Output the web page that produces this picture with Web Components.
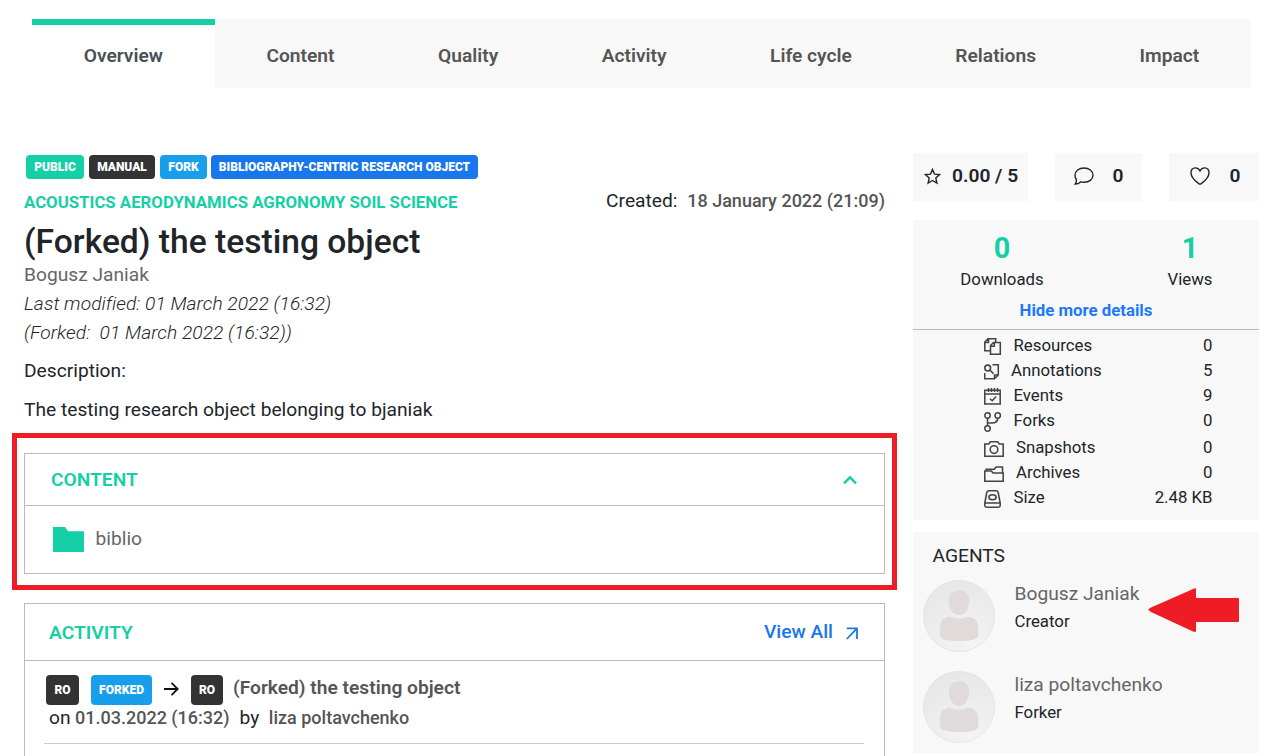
<!DOCTYPE html>
<html lang="en">
<head>
<meta charset="utf-8">
<title>(Forked) the testing object</title>
<style>
html,body{margin:0;padding:0;background:#fff}
body{height:756px;overflow:hidden;font-family:Roboto,"Liberation Sans",sans-serif;color:#212529}
</style>
</head>
<body>
<ro-page></ro-page>
<script>
const define=(name,css,html)=>customElements.define(name,class extends HTMLElement{
  constructor(){
    super();
    const t=document.createElement('template');
    t.innerHTML=`<style>*{box-sizing:border-box}${css}</style>${typeof html==='function'?html(this):html}`;
    this.attachShadow({mode:'open'}).append(t.content.cloneNode(true));
  }
});

define('ro-tab',
`:host{display:flex;flex:1 1 auto;justify-content:center;align-items:center;box-sizing:border-box;height:69px;padding-bottom:3px;border-top:6px solid #f8f8f8;background:#f8f8f8;font-size:19.2px;font-weight:600;color:#555;white-space:nowrap}
:host([active]){background:#fff;border-top-color:#15cfa6;color:#495057}`,
`<slot></slot>`);

define('ro-tabs',
`:host{display:flex;margin:19px 35px 0 32px}`,
`<slot></slot>`);

define('ro-badge',
`:host{display:flex;align-items:center;justify-content:center;box-sizing:border-box;height:24px;border-radius:4px;background:#333;color:#fff;font-size:12px;font-weight:900;letter-spacing:0;white-space:nowrap}
:host([tone=green]){background:#15cfa6}
:host([tone=sky]){background:#189fec}
:host([tone=blue]){background:#1877ec}
:host([big]){height:30px}`,
`<slot></slot>`);

define('ro-header',
`:host{display:block;position:relative}
.badges{display:flex;padding:2px 0 0 2px}
.meta{display:flex;justify-content:space-between;height:46px;white-space:nowrap}
.cat{line-height:20px;margin-top:13px;font-size:16.8px;font-weight:700;color:#15cfa6}
.created{line-height:20px;margin-top:12px;font-size:19.2px}
.created b{font-weight:500;font-size:18px;color:#555;margin-left:5px}
h1{margin:-3px 0 0;font-size:33.6px;line-height:40px;font-weight:500}
.author{font-size:19.2px;line-height:24px;margin-top:1px;color:#666}
.dates{font-size:19.2px;line-height:29px;font-style:italic;font-weight:300;white-space:pre;letter-spacing:.05px}
.author+.dates{margin-top:2px}
.desc{font-size:19.2px;line-height:39px}
.dates+.desc{margin-top:4px}`,
`<div class="badges"><ro-badge tone="green" style="width:58px;margin-right:5px">PUBLIC</ro-badge><ro-badge style="width:66px;margin-right:5px">MANUAL</ro-badge><ro-badge tone="sky" style="width:47px;margin-right:4px">FORK</ro-badge><ro-badge tone="blue" style="width:267px">BIBLIOGRAPHY-CENTRIC RESEARCH OBJECT</ro-badge></div>
<div class="meta"><div class="cat">ACOUSTICS AERODYNAMICS AGRONOMY SOIL SCIENCE</div><div class="created">Created: <b>18 January 2022 (21:09)</b></div></div>
<h1>(Forked) the testing object</h1>
<div class="author">Bogusz Janiak</div>
<div class="dates">Last modified: 01 March 2022 (16:32)</div>
<div class="dates">(Forked:  01 March 2022 (16:32))</div>
<div class="desc">Description:</div>
<div class="desc">The testing research object belonging to bjaniak</div>`);

define('ro-panel',
`:host{display:block;box-sizing:border-box;border:1px solid #bbb}
header{display:flex;align-items:center;justify-content:space-between;border-bottom:1px solid #bbb;height:var(--head,52px);padding:var(--pad,1px 27px 0 26px)}
h2{margin:0;font-size:19.2px;line-height:20px;font-weight:600;color:#15cfa6}`,
el=>`<header><h2>${el.getAttribute('heading')}</h2><slot name="action"></slot></header><slot></slot>`);

define('ro-highlight',
`:host{display:block;box-sizing:border-box;margin:4px -12px 0;border:5px solid #ee1c25;padding:15px 7px 11px}`,
`<slot></slot>`);

define('ro-folder',
`:host{display:flex;align-items:center;height:67px;padding-left:28px;color:#666;font-size:19.2px}
svg{width:31px;height:25px;margin-right:11.500px}span{margin-top:-3px}`,
`<svg viewBox="0 0 31 25"><path d="M0 0H12L15 4.300H31V25H0Z" fill="#15cfa6"/></svg><span><slot></slot></span>`);

define('ro-activity-item',
`:host{display:block;margin:14px 20px 0 19px;height:69px;border-bottom:1px solid #ccc;white-space:nowrap}
.a{display:flex;align-items:center;padding-left:2px;height:30px}
.t{font-size:19.2px;font-weight:600;color:#555;margin:-4px 0 0 10px;line-height:24px}
.b{font-size:19.2px;line-height:24px;padding-left:5px;margin-top:1px;display:flex}
.b b{font-weight:500;font-size:18px;color:#555}
svg{margin:-2px 12px 0 11px}`,
`<div class="a"><ro-badge big style="width:33px;margin-right:12px">RO</ro-badge><ro-badge big tone="sky" style="width:61px">FORKED</ro-badge><svg width="16" height="16" viewBox="0 0 16 16" fill="none" stroke="#111" stroke-width="1.800"><path d="M1 8H15M8.500 1.800L14.700 8L8.500 14.200"/></svg><ro-badge big style="width:32px">RO</ro-badge><span class="t">(Forked) the testing object</span></div>
<div class="b"><span>on</span><b style="margin-left:4.500px">01.03.2022 (16:32)</b><span style="margin-left:10px">by</span><b style="margin-left:9.500px">liza poltavchenko</b></div>`);

const icons={
 star:`<svg width="17" height="17" viewBox="0 0 17 17"><path d="M8.5 1.5L10.5 6.1L15.6 6.6L11.8 10L12.9 15L8.5 12.5L4.1 15L5.2 10L1.4 6.6L6.5 6.1Z"/></svg>`,
 comment:`<svg width="20" height="18" viewBox="0 0 20 18"><path d="M10 1C15 1 19 4 19 8.2C19 12.5 15 15.3 10 15.3C8.600 15.300 7.600 15.200 6.500 14.900C5.200 16.300 3.400 17 1.200 17C2.200 15.700 2.500 14.300 2.400 12.600C1.500 11.300 1 9.800 1 8.200C1 4 5 1 10 1Z"/></svg>`,
 heart:`<svg width="20" height="18" viewBox="0 0 20 18"><path d="M10 4C11.200 1.600 13 .8 14.800 .9C17.300 1.100 19 3 19 5.700C19 9.500 15.500 13.500 11.300 16.600Q10 17.400 8.700 16.600C4.500 13.500 1 9.500 1 5.700C1 3 2.700 1.100 5.200 .9C7 .8 8.800 1.600 10 4Z"/></svg>`,
 resources:`<svg width="18" height="18" viewBox="0 0 18 18"><path d="M6.500 16.300V7.500L9.500 4.500H16.300V16.300ZM6.500 8.300H10.300V4.500M6.500 12.700H.8V4L4 .8H11.700V4.500M.8 4.500H4.500V.8"/></svg>`,
 annotations:`<svg width="16" height="16" viewBox="0 0 16 16"><circle cx="3.700" cy="4" r="2.900"/><path d="M5.800 6L9.500 9.600M.7 9V14.800H10.500L14.300 11V.8H8.500M10.500 14.800V11H14.300"/></svg>`,
 events:`<svg width="18" height="17" viewBox="0 0 18 17"><path d="M.8 2.300H16.200V16H.8ZM.8 6H16.200M4.500 0V4M7.500 0V4M10.500 0V4M13.500 0V4M6 10.700L8.200 12.700L12.200 8.500"/></svg>`,
 forks:`<svg width="18" height="20" viewBox="0 0 18 20"><circle cx="3.500" cy="3.500" r="2.700"/><circle cx="13.700" cy="3.500" r="2.700"/><circle cx="3.500" cy="16.500" r="2.700"/><path d="M3.500 6.200V13.800M13.700 6.200C13.700 11 10 11 3.800 11"/></svg>`,
 snapshots:`<svg width="20" height="16" viewBox="0 0 20 16"><path d="M.8 3H4.800L6.300 .8H13.700L15.200 3H19.200V15.200H.8Z"/><circle cx="10" cy="8.600" r="3.800"/></svg>`,
 archives:`<svg width="20" height="16" viewBox="0 0 20 16"><path d="M.8 15.200V5H7.500L9 7H19.200V15.200ZM2.200 5V3.300H10.200L12.200 1H18.500V7"/></svg>`,
 size:`<svg width="17" height="18" viewBox="0 0 17 18"><path d="M.8 13L2.800 2.500Q3.200.8 5 .8H12Q13.800.8 14.200 2.500L16.200 13V15.500Q16.200 17.200 14.500 17.200H2.500Q.8 17.200 .8 15.500ZM.8 13H16.200"/><ellipse cx="8.500" cy="7.200" rx="3.600" ry="2.500"/></svg>`
};

define('ro-tile',
`:host{display:flex;align-items:center;box-sizing:border-box;height:48px;background:#f8f8f8;font-size:19.2px;font-weight:600;padding-bottom:3px;white-space:nowrap}
svg{flex:none;fill:none;stroke:#212529;stroke-width:1.4;margin-top:1px;margin-right:var(--gap,11px)}`,
el=>`${icons[el.getAttribute('icon')]}<slot></slot>`);

define('ro-count',
`:host{display:block;text-align:center;font-size:16.8px;line-height:20px}
b{display:block;font-size:28.8px;line-height:34px;font-weight:700;color:#15cfa6;margin-bottom:4px}`,
el=>`<b>${el.getAttribute('value')}</b><slot></slot>`);

define('ro-detail',
`:host{display:flex;align-items:center;height:25px;padding:0 46.500px 0 70px;font-size:16.8px}
i{display:flex;flex:none;align-items:center;width:var(--w,29.500px);margin-left:1px}
i svg{fill:none;stroke:#444;stroke-width:1.55;position:relative;top:2px}
span{flex:1}`,
el=>`<i>${icons[el.getAttribute('icon')]}</i><span><slot></slot></span>${el.getAttribute('value')}`);

define('ro-stats',
`:host{display:block;height:300px;margin-top:19px;background:#f8f8f8}
.top{height:110px;border-bottom:1px solid #bbb;padding-top:11px}
.counts{display:grid;grid-template-columns:178px 168px}
.counts ro-count:last-child{padding-left:30px}
.more{text-align:center;font-size:16.8px;line-height:20px;font-weight:700;color:#1b78ff;margin-top:11px}
.list{padding-top:2px}`,
`<div class="top"><div class="counts"><ro-count value="0">Downloads</ro-count><ro-count value="1">Views</ro-count></div><div class="more">Hide more details</div></div>
<div class="list">
<ro-detail icon="resources" value="0">Resources</ro-detail>
<ro-detail icon="annotations" value="5" style="--w:27px">Annotations</ro-detail>
<ro-detail icon="events" value="9">Events</ro-detail>
<ro-detail icon="forks" value="0">Forks</ro-detail>
<ro-detail icon="snapshots" value="0" style="margin-top:2px;--w:32px">Snapshots</ro-detail>
<ro-detail icon="archives" value="0" style="--w:32px">Archives</ro-detail>
<ro-detail icon="size" value="2.48 KB">Size</ro-detail>
</div>`);

define('ro-agent',
`:host{display:flex;height:91px;padding-left:10px}
svg{width:72px;height:72px;flex:none;margin-right:19.500px}
.n{font-size:19.2px;line-height:24px;color:#666;margin-top:2px}
.r{font-size:16.8px;line-height:24px;margin-top:3px}`,
el=>`<svg viewBox="0 0 72 72"><defs><radialGradient id="g" cx=".65" cy=".9" r=".9"><stop offset="0" stop-color="#f4f4f4"/><stop offset="1" stop-color="#e7e7e7"/></radialGradient></defs><circle cx="36" cy="36" r="35.600" fill="url(#g)" stroke="#e2e2e2" stroke-width=".8"/><path d="M36 10.500C43 10.500 46 14 46 21C46 29 42 35 36 35C30 35 26 29 26 21C26 14 29 10.500 36 10.500Z" fill="#e0dada"/><path d="M26 36.800C28 36.800 30 38.500 36 38.500C42 38.500 44 36.800 46 36.800C52 37.500 55.300 42 55.300 48V55C55.300 60.500 44 61 36 61C28 61 17 60.500 17 55V48C17 42 20 37.500 26 36.800Z" fill="#e0dada"/></svg><div><div class="n"><slot></slot></div><div class="r">${el.getAttribute('role-name')}</div></div>`);

define('ro-agents',
`:host{display:block;position:relative;height:221px;margin-top:12px;background:#f8f8f8;overflow:hidden}
h3{margin:0;padding:12px 0 12px 19.500px;font-size:19.2px;line-height:24px;font-weight:400}
.arrow{position:absolute;left:235px;top:56px}`,
`<h3>AGENTS</h3><ro-agent role-name="Creator">Bogusz Janiak</ro-agent><ro-agent role-name="Forker">liza poltavchenko</ro-agent>
<svg class="arrow" width="91" height="45" viewBox="0 0 91 45"><path d="M0 21.500L3 19.500L44 1.500Q48 -.5 48 1V10H90Q91 10 91 11V33Q91 34 90 34H48V43Q48 44.500 45 43.500L3 24Z" fill="#ee1c25"/></svg>`);

define('ro-page',
`:host{display:block;width:1286px;height:756px;overflow:hidden}
main{display:grid;grid-template-columns:861px 346px;gap:28px;padding:65px 0 0 24px}
.tiles{display:flex;justify-content:space-between}
.act{height:220px;margin-top:13px;--head:57px;--pad:1px 25px 0 24px}
.all{display:flex;align-items:center;color:#1877ec;font-size:19.2px;line-height:20px;font-weight:500;margin-top:-2px}`,
`<ro-tabs><ro-tab active>Overview</ro-tab><ro-tab>Content</ro-tab><ro-tab>Quality</ro-tab><ro-tab>Activity</ro-tab><ro-tab>Life cycle</ro-tab><ro-tab>Relations</ro-tab><ro-tab>Impact</ro-tab></ro-tabs>
<main><section><ro-header></ro-header>
<ro-highlight><ro-panel heading="CONTENT"><svg slot="action" width="14" height="10" viewBox="0 0 14 10" fill="none" stroke="#15cfa6" stroke-width="2.400"><path d="M1 8.300L7 2.300L13 8.300"/></svg><ro-folder>biblio</ro-folder></ro-panel></ro-highlight>
<ro-panel class="act" heading="ACTIVITY"><span slot="action" class="all">View All<svg style="margin:3px 1px 0 13px" width="12" height="13" viewBox="0 0 12 13" fill="none" stroke="#1877ec" stroke-width="1.800"><path d="M.8 1.300H11V12M11 1.300L.8 12"/></svg></span><ro-activity-item></ro-activity-item></ro-panel>
</section>
<aside><div class="tiles"><ro-tile icon="star" style="width:115px;padding-left:11px">0.00 / 5</ro-tile><ro-tile icon="comment" style="width:87px;padding-left:18.500px;--gap:19px">0</ro-tile><ro-tile icon="heart" style="width:90px;padding-left:20.500px;--gap:20px">0</ro-tile></div>
<ro-stats></ro-stats><ro-agents></ro-agents></aside></main>`);
</script>
</body>
</html>
